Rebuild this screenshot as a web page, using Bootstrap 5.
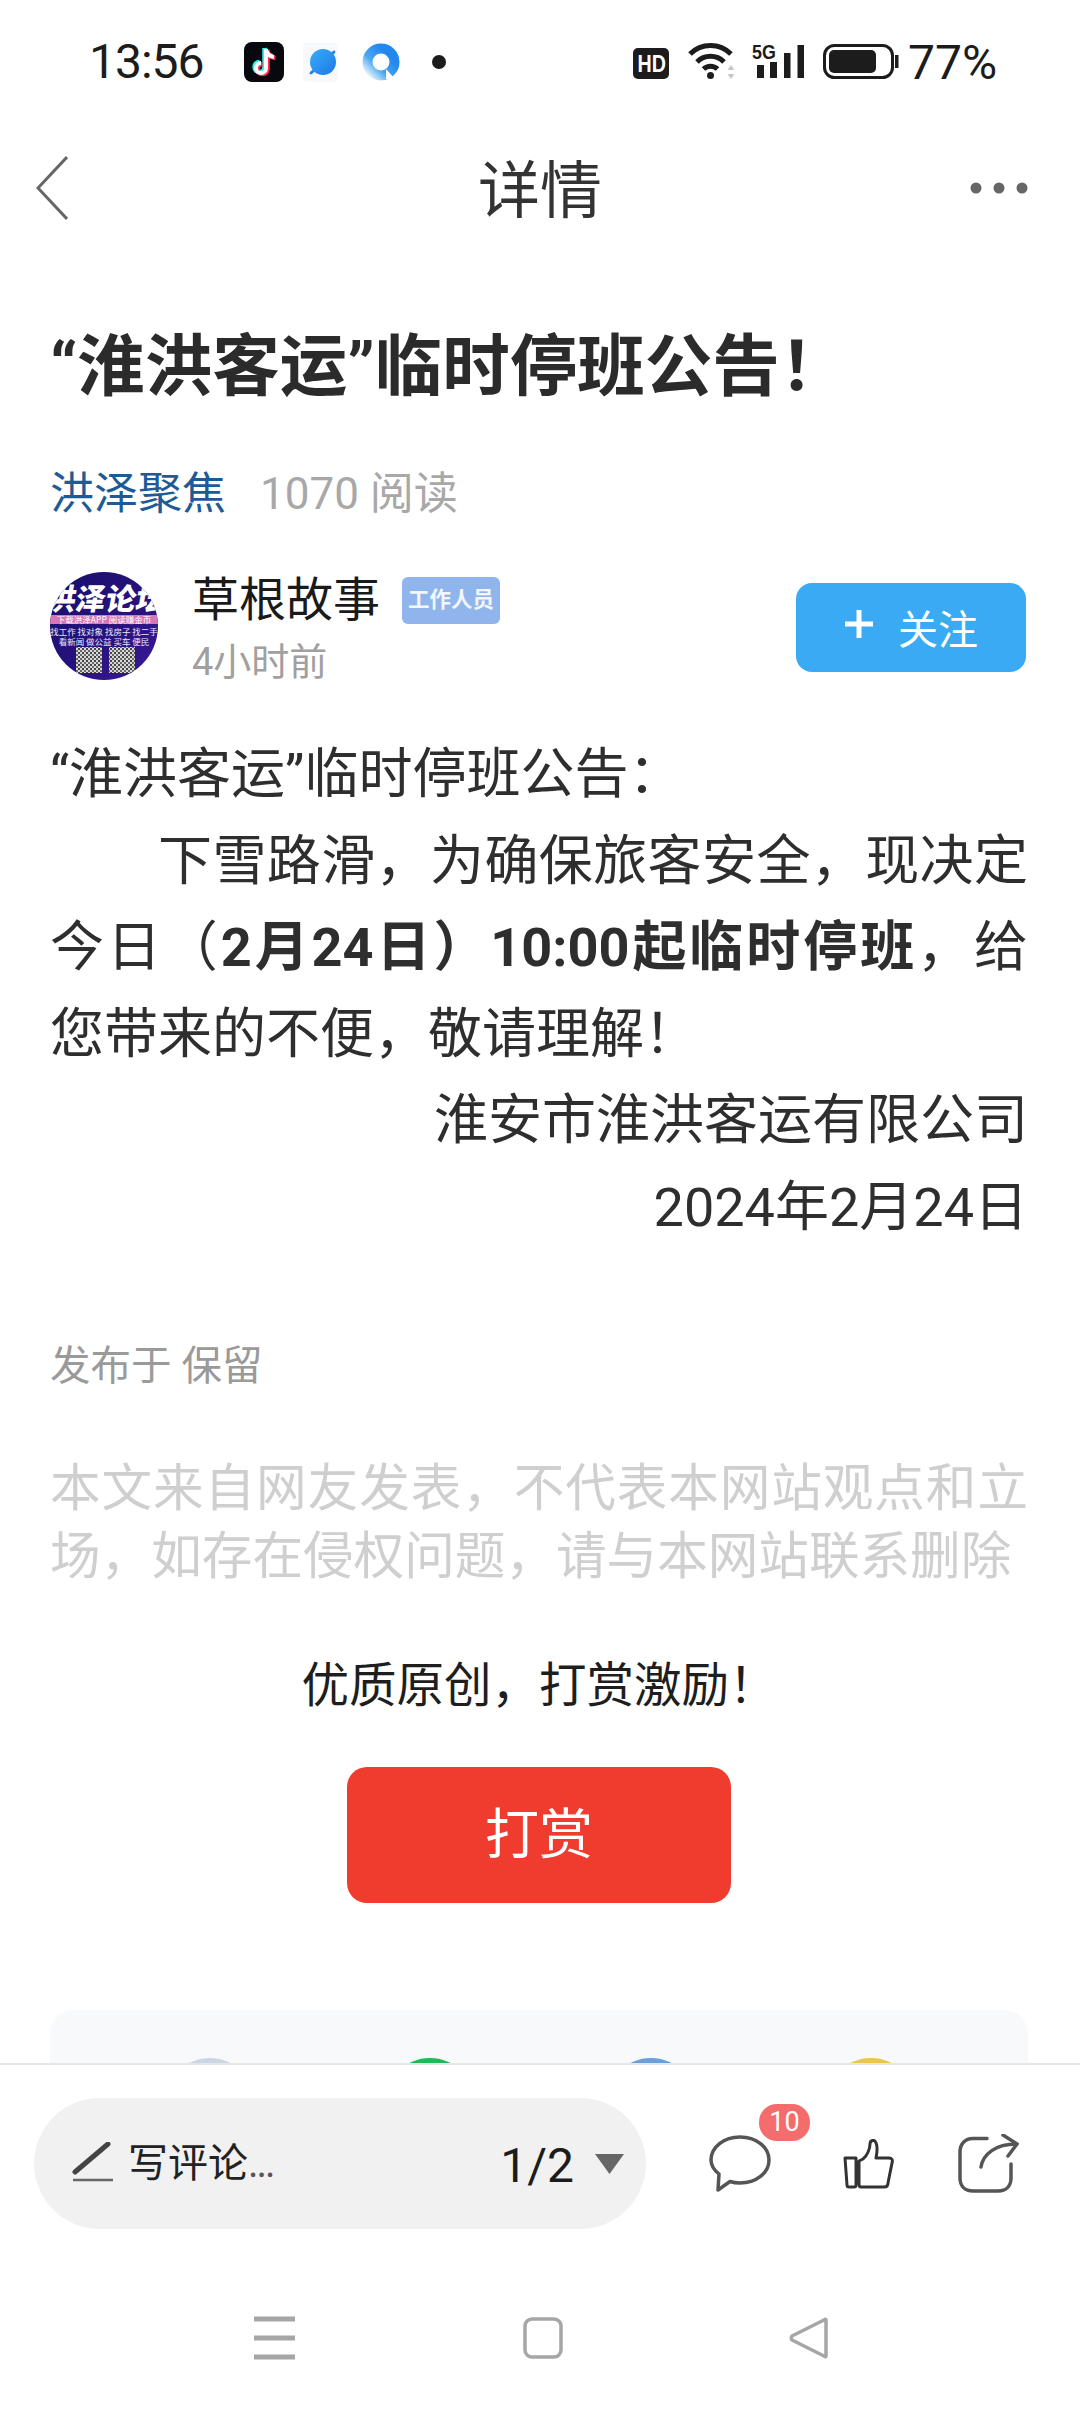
<!DOCTYPE html>
<html lang="zh-CN">
<head>
  <meta charset="UTF-8">
  <meta name="viewport" content="width=device-width, initial-scale=1.0">
  <title>详情</title>
  <link href="https://cdn.jsdelivr.net/npm/bootstrap@5.3.0/dist/css/bootstrap.min.css" rel="stylesheet">
  <style>
    body { width: 1080px; height: 2412px; overflow: hidden; background: #fff; color: #222; font-family: Roboto, "Noto Sans CJK SC", sans-serif; }
    .phone { width: 1080px; height: 2412px; }
    .status-row { height: 124px; flex: none; padding-left: 89px; font-size: 48px; color: #1c1c1c; }
    .status-row svg { flex: none; display: block; }
    .status-time { width: 113px; margin-right: 42px; letter-spacing: -1px; }
    .status-pct { margin-left: 9px; font-size: 48px; margin-top: 2px; }
    .head-row { height: 128px; flex: none; padding: 0 52px 0 36px; }
    .head-title { font-size: 62px; color: #333; line-height: 1; margin-top: 4px; }
    .page-body { padding: 0 52px 0 50px; min-height: 0; overflow: hidden; }
    .art-title { font-size: 67.5px; font-weight: 700; line-height: 90px; margin: 70px 0 0; color: #2b2b2b; white-space: nowrap; }
    .src-row { margin-top: 52px; height: 60px; line-height: 60px; font-size: 44px; }
    .src-name { color: #1d5a96; }
    .src-reads { color: #a8a8a8; margin-left: 34px; }
    .author-row { margin-top: 48px; height: 108px; }
    .author-pic { width: 108px; height: 108px; flex: none; }
    .author-name { font-size: 47px; line-height: 56px; color: #1a1a1a; }
    .staff-tag { width: 98px; height: 47px; margin-left: 22px; background: #90b5ec; color: #f2f6fd; font-size: 21.500px; font-weight: 700; border-radius: 6px; }
    .author-time { font-size: 38px; line-height: 48px; color: #a0a0a0; margin-top: 10px; }
    .author-txt { margin-left: 34px; }
    .follow-btn { width: 230px; height: 89px; margin: 11px 2px 0 0; background: #3aaaf5; color: #fff; border: 0; border-radius: 16px; font-size: 40px; padding: 0; }
    .follow-btn:hover { background: #3aaaf5; color: #fff; }
    .follow-btn svg { margin-top: -8px; }
    .follow-btn span { margin: 6px 0 0 8px; }
    .art-text { margin-top: 52px; font-size: 54px; line-height: 86.5px; color: #2e2e2e; }
    .art-para { text-align: justify; text-indent: 108px; }
    .art-sign { text-align: right; }
    .pub-row { margin-top: 87px; font-size: 40.500px; line-height: 56px; color: #9a9a9a; }
    .notice-txt { margin-top: 61px; font-size: 50.600px; line-height: 68px; color: #cfcfcf; text-align: justify; }
    .reward-txt { margin-top: 60px; font-size: 47.500px; line-height: 70px; color: #1e1e1e; }
    .reward-btn { display: block; width: 384px; height: 136px; margin: 46px auto 0; padding: 0; background: #f03c2e; color: #fff; border: 0; border-radius: 20px; font-size: 54px; }
    .reward-btn:hover { background: #f03c2e; color: #fff; }
    .share-box { margin-top: 107px; height: 160px; padding: 48px 112px 0 115px; background: #f8f9fa; border-radius: 24px 24px 0 0; }
    .share-dot { width: 90px; height: 90px; border-radius: 50%; }
    .foot-box { height: 349px; flex: none; border-top: 2px solid #e6e6e6; background: #fff; position: relative; }
    .foot-row { padding: 33px 0 0 34px; }
    .write-pill { width: 612px; height: 131px; background: #f1f1f1; border-radius: 66px; padding: 0 21px 0 38px; }
    .write-txt { font-size: 40px; margin-left: 14px; color: #222; }
    .write-dots { letter-spacing: -2px; color: #555; }
    .page-num { font-size: 48px; margin-left: auto; margin-right: 20px; color: #1c1c1c; margin-top: 4px; }
    .act-btn { position: relative; flex: none; }
    .act-btn svg { display: block; }
    .msg-count { position: absolute; left: 50px; top: -31px; width: 51px; height: 37px; background: #f56c6c; color: #fff; font-size: 27px; line-height: 37px; text-align: center; border-radius: 18px; }
    .sys-row { position: absolute; left: 0; top: 250px; width: 100%; height: 46px; padding-left: 254px; }
    .sys-row svg { flex: none; display: block; }
    .pic-title { font-family: "Noto Sans CJK SC", sans-serif; font-size: 30px; font-weight: 900; }
    .pic-line { font-family: "Noto Sans CJK SC", sans-serif; font-size: 8.500px; }
    .bar-label { font-family: "Liberation Sans", sans-serif; font-weight: 700; }
  </style>
</head>
<body>
<div class="phone d-flex flex-column">

  <!-- status bar -->
  <div class="status-row d-flex align-items-center">
    <span class="status-time">13:56</span>
    <svg width="40" height="40" viewBox="0 0 40 40"><rect width="40" height="40" rx="8" fill="#08080f"/><path d="M22 7v19a5 5 0 1 1-5-5M22 7c.5 4.500 3.500 7.500 8 8" fill="none" stroke="#25f4ee" stroke-width="4.500" transform="translate(-1.500 -1)"/><path d="M22 7v19a5 5 0 1 1-5-5M22 7c.5 4.500 3.500 7.500 8 8" fill="none" stroke="#fe2c55" stroke-width="4.500" transform="translate(1.500 1)"/><path d="M22 7v19a5 5 0 1 1-5-5M22 7c.5 4.500 3.500 7.500 8 8" fill="none" stroke="#fff" stroke-width="4"/></svg>
    <svg width="35" height="39" viewBox="0 0 35 39" style="margin-left:19px">
      <defs><linearGradient id="planet" x1="0" y1="0" x2="1" y2="1"><stop offset="0" stop-color="#38adf9"/><stop offset="1" stop-color="#1c78e6"/></linearGradient></defs>
      <rect width="35" height="39" rx="4" fill="#f8f9fb"/>
      <path d="M30 8c2-1 3 0 2 2L9 31c-2 1-3 0-2-2z" fill="#2a7fe2"/>
      <circle cx="20" cy="19" r="13" fill="url(#planet)"/>
    </svg>
    <svg width="38" height="38" viewBox="0 0 38 38" style="margin-left:24px">
      <defs><linearGradient id="qring" x1="1" y1="0" x2="0" y2="1"><stop offset=".25" stop-color="#2388ee"/><stop offset=".65" stop-color="#4aa8f2"/><stop offset="1" stop-color="#eef7fd"/></linearGradient></defs>
      <circle cx="19" cy="19" r="13.500" fill="none" stroke="url(#qring)" stroke-width="10"/>
      <path d="M24 26l9 10h-9z" fill="#fff"/>
    </svg>
    <svg width="16" height="16" viewBox="0 0 16 16" style="margin-left:31px"><circle cx="8" cy="8" r="7" fill="#1c1c1c"/></svg>
    <svg width="36" height="44" viewBox="0 0 36 44" style="margin-left:186px"><rect y="8" width="36" height="31" rx="5" fill="#1c1c1c"/><text class="bar-label" transform="translate(4.500 32) scale(.82 1)" font-size="24" fill="#fff">HD</text></svg>
    <svg width="48" height="44" viewBox="0 0 48 44" style="margin-left:19px"><path d="M2 14a29 29 0 0 1 41 0M9 22a19 19 0 0 1 27 0M15.500 29a10 10 0 0 1 14 0" fill="none" stroke="#1c1c1c" stroke-width="5"/><circle cx="22.500" cy="35.500" r="3.500" fill="#1c1c1c"/><path d="M43 25l3.500 5h-7zM43 39l3.500-5h-7z" fill="#c8c8c8"/></svg>
    <svg width="52" height="44" viewBox="0 0 52 44" style="margin-left:16px"><text class="bar-label" transform="translate(0 19) scale(.85 1)" font-size="21" fill="#1c1c1c">5G</text><rect x="5" y="25" width="7" height="13" fill="#1c1c1c"/><rect x="18" y="22" width="7" height="16" fill="#1c1c1c"/><rect x="32" y="13" width="6.500" height="25" fill="#1c1c1c"/><rect x="45.500" y="5" width="6.500" height="33" fill="#1c1c1c"/></svg>
    <svg width="76" height="44" viewBox="0 0 76 44" style="margin-left:19px"><rect x="1.500" y="5.500" width="68" height="32" rx="10" fill="none" stroke="#1c1c1c" stroke-width="3"/><rect x="6" y="10" width="47" height="23" rx="5" fill="#1c1c1c"/><rect x="72" y="15" width="3.500" height="13" fill="#1c1c1c"/></svg>
    <span class="status-pct">77%</span>
  </div>

  <!-- title bar -->
  <div class="head-row d-flex align-items-center justify-content-between position-relative">
    <svg width="32" height="64" viewBox="0 0 32 64"><path d="M31 1L2 32l29 31" fill="none" stroke="#666" stroke-width="3"/></svg>
    <div class="head-title position-absolute top-50 start-50 translate-middle">详情</div>
    <svg width="58" height="12" viewBox="0 0 58 12"><circle cx="6" cy="6" r="5.500" fill="#666"/><circle cx="29" cy="6" r="5.500" fill="#666"/><circle cx="52" cy="6" r="5.500" fill="#666"/></svg>
  </div>

  <!-- article -->
  <div class="page-body flex-grow-1">
    <h1 class="art-title">“淮洪客运”临时停班公告！</h1>
    <div class="src-row"><span class="src-name">洪泽聚焦</span><span class="src-reads">1070 阅读</span></div>

    <div class="author-row d-flex">
      <svg class="author-pic" viewBox="0 0 108 108">
        <defs>
          <clipPath id="pic"><circle cx="54" cy="54" r="54"/></clipPath>
          <linearGradient id="picbg" x1="0" y1="0" x2="1" y2="1"><stop offset="0" stop-color="#14106a"/><stop offset=".6" stop-color="#2a1280"/><stop offset="1" stop-color="#3d1a9a"/></linearGradient>
          <pattern id="qr" width="4" height="4" patternUnits="userSpaceOnUse"><rect width="4" height="4" fill="#d8d8d8"/><rect width="2" height="2" fill="#444"/><rect x="2" y="2" width="2" height="2" fill="#666"/></pattern>
        </defs>
        <g clip-path="url(#pic)">
          <rect width="108" height="108" fill="url(#picbg)"/>
          <text class="pic-title" x="54" y="38" fill="#fff" text-anchor="middle" transform="skewX(-10) translate(7 0)">洪泽论坛</text>
          <rect x="0" y="43" width="108" height="9" fill="#d776b8"/>
          <text class="pic-line" x="54" y="50.500" fill="#fff" text-anchor="middle">下载洪泽APP 阅读赚金币</text>
          <text class="pic-line" x="54" y="63" fill="#e8e8ff" text-anchor="middle">找工作 找对象 找房子 找二手</text>
          <text class="pic-line" x="54" y="73" fill="#e8e8ff" text-anchor="middle">看新闻 做公益 买车 便民</text>
          <rect x="26" y="75" width="26" height="26" fill="url(#qr)"/>
          <rect x="59" y="75" width="26" height="26" fill="url(#qr)"/>
        </g>
      </svg>
      <div class="author-txt flex-grow-1">
        <div class="d-flex align-items-center">
          <span class="author-name">草根故事</span>
          <span class="staff-tag d-flex align-items-center justify-content-center">工作人员</span>
        </div>
        <div class="author-time">4小时前</div>
      </div>
      <button class="btn follow-btn d-flex align-items-center justify-content-center gap-3">
        <svg width="30" height="30" viewBox="0 0 30 30"><path d="M15 1v28M1 15h28" stroke="#fff" stroke-width="5"/></svg>
        <span>关注</span>
      </button>
    </div>

    <div class="art-text">
      <div>“淮洪客运”临时停班公告：</div>
      <div class="art-para">下雪路滑，为确保旅客安全，现决定今日（<strong>2月24日）10:00起临时停班</strong>，给您带来的不便，敬请理解！</div>
      <div class="art-sign">淮安市淮洪客运有限公司</div>
      <div class="art-sign">2024年2月24日</div>
    </div>

    <div class="pub-row">发布于 保留</div>
    <div class="notice-txt">本文来自网友发表，不代表本网站观点和立场，如存在侵权问题，请与本网站联系删除</div>
    <div class="reward-txt text-center">优质原创，打赏激励！</div>
    <button class="btn reward-btn">打赏</button>

    <div class="share-box d-flex justify-content-between">
      <div class="share-dot" style="background:#c9d6e3"></div>
      <div class="share-dot" style="background:#1fb955"></div>
      <div class="share-dot" style="background:#6a9fdc"></div>
      <div class="share-dot" style="background:#edc44f"></div>
    </div>
  </div>

  <!-- bottom bar -->
  <div class="foot-box">
    <div class="foot-row d-flex align-items-center">
      <div class="write-pill d-flex align-items-center">
        <svg width="42" height="44" viewBox="0 0 42 44"><path d="M3 30L36 2" stroke="#444" stroke-width="5" stroke-linecap="round" fill="none"/><path d="M1 38h40" stroke="#666" stroke-width="2.500"/></svg>
        <span class="write-txt">写评论<span class="write-dots">...</span></span>
        <span class="page-num">1/2</span>
        <svg width="31" height="20" viewBox="0 0 31 20"><path d="M1 0h29L15.500 20z" fill="#666"/></svg>
      </div>
      <div class="act-btn" style="margin-left:63px">
        <svg width="62" height="58" viewBox="0 0 62 58"><path d="M21 46.500c3 1 6 1.500 10 1.500 16 0 29-10 29-23S47 2 31 2 2 12 2 25c0 5 3 10 8 14l-1 16z" fill="none" stroke="#555" stroke-width="3.500" stroke-linejoin="round"/></svg>
        <span class="msg-count">10</span>
      </div>
      <svg class="act-btn" style="margin-left:72px" width="51" height="50" viewBox="0 0 51 50"><path d="M2 19h11v27q0 2-2 2H6q-2 0-2-2zM18 48q-2 0-2-3V22l4-2c4-3 7-10 7-15 0-4 5-5 6-1 2 4 1 10 0 15h13c3 0 4 2 3 5l-4 20c0 3-2 4-4 4z" fill="none" stroke="#333" stroke-width="3" stroke-linejoin="round"/></svg>
      <svg class="act-btn" style="margin-left:64px" width="61" height="59" viewBox="0 0 61 59"><path d="M29 4.500H15C7 4.500 2 10 2 18v26c0 8 5 13 13 13h25c8 0 13-5 13-13V30" fill="none" stroke="#555" stroke-width="3.500" stroke-linecap="round"/><path d="M23 33C25 20 38 10 58 10M45 1l14 9-9 12" fill="none" stroke="#555" stroke-width="3.500" stroke-linecap="round"/></svg>
    </div>

    <div class="sys-row d-flex align-items-center">
      <svg width="41" height="44" viewBox="0 0 41 44"><path d="M0 3h41M0 22h41M0 41h41" stroke="#a6a6a6" stroke-width="5"/></svg>
      <svg style="margin-left:228px" width="40" height="42" viewBox="0 0 40 42"><rect x="2" y="2" width="36" height="38" rx="7" fill="none" stroke="#a6a6a6" stroke-width="3.500"/></svg>
      <svg style="margin-left:226px" width="40" height="42" viewBox="0 0 40 42"><path d="M37 3c0-1-1-1-2 0L3 19c-1 1-1 3 0 4l32 16c1 1 2 1 2 0z" fill="none" stroke="#a6a6a6" stroke-width="3.500" stroke-linejoin="round"/></svg>
    </div>
  </div>
</div>
<script src="https://cdn.jsdelivr.net/npm/bootstrap@5.3.0/dist/js/bootstrap.bundle.min.js"></script>
</body>
</html>
